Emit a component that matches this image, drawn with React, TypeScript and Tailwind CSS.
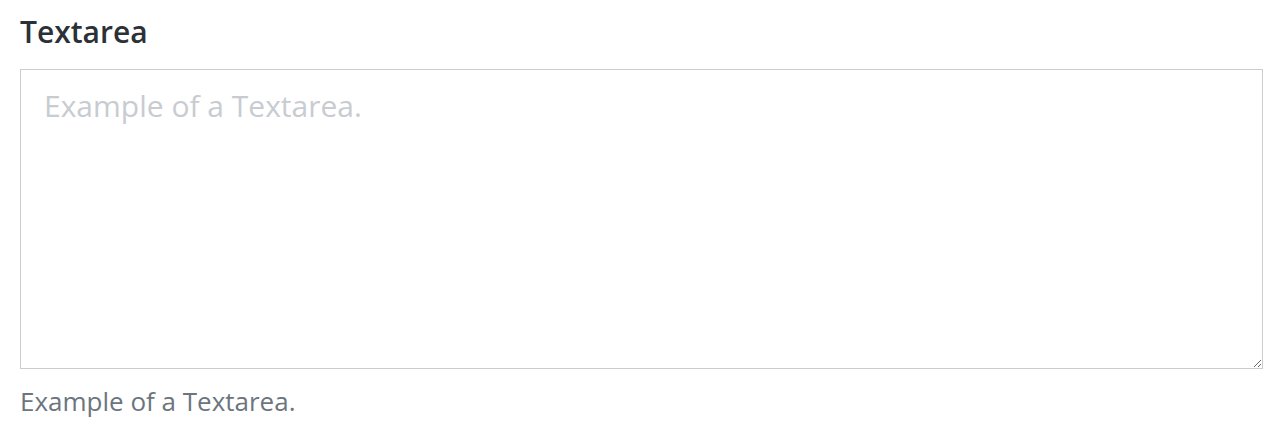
import React from 'react';

const App: React.FC = () => {
    return (
        <div className="min-h-screen bg-white pl-5 pr-[23px] pt-[10px] font-['Open_Sans',sans-serif]">
            <h2 className="text-[30px] font-semibold leading-[44px] text-[#2b3136]">Textarea</h2>
            <textarea
                placeholder="Example of a Textarea."
                className="mt-[15px] block h-[300px] w-full resize-y border border-[#cccccc] px-[23px] py-[14px] text-[30px] leading-[44px] text-[#495057] outline-none placeholder:text-[#c8ccd0]"
            />
            <p className="mt-[12px] text-[26px] leading-[40px] text-[#6c757d]">Example of a Textarea.</p>
        </div>
    );
};

export default App;
